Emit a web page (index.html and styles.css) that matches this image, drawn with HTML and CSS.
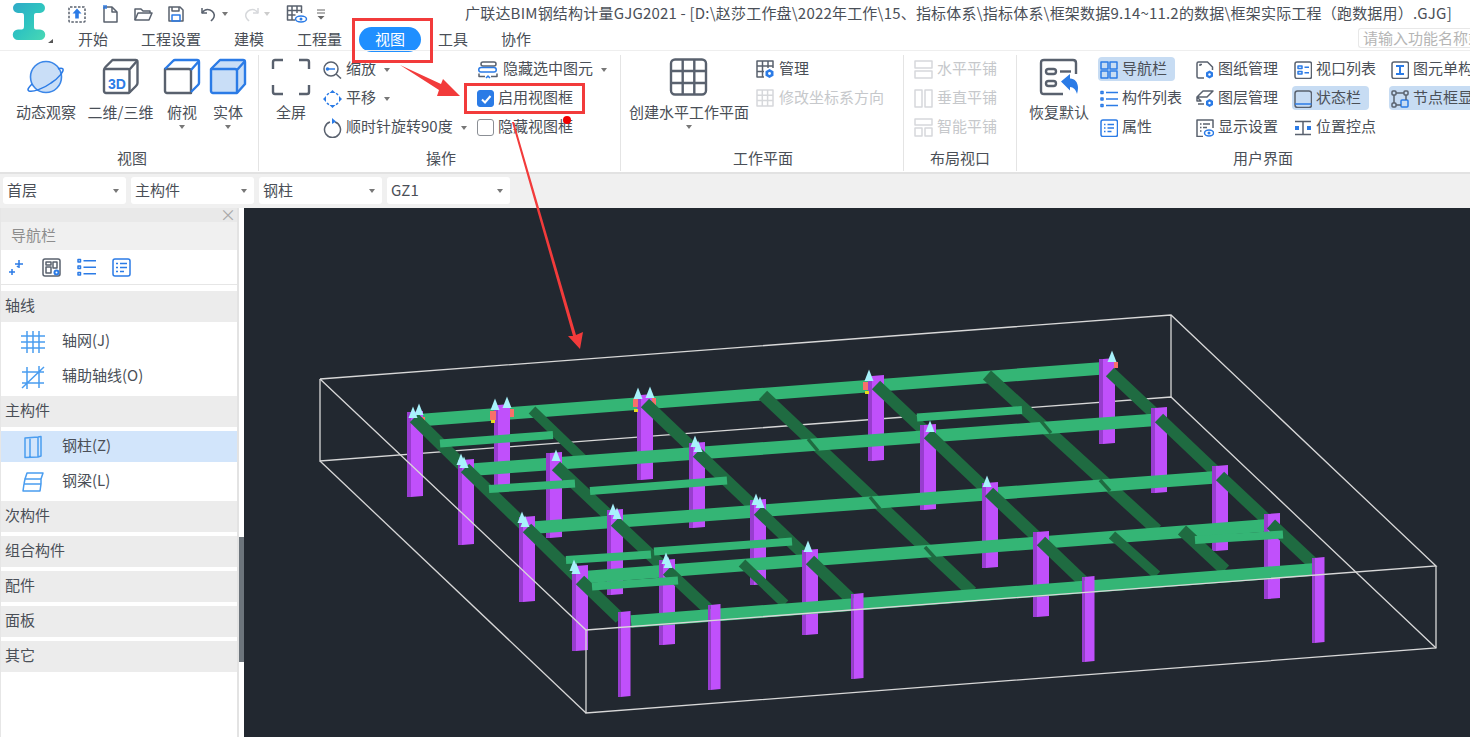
FILE: index.html
```html
<!DOCTYPE html>
<html>
<head>
  <title>广联达BIM钢结构计量GJG2021</title>
  <link rel="stylesheet" href="styles.css">
</head>
<body>
<div class="app">

  <!-- title bar and tabs -->
  <div class="header">
    <div class="logo">
      <svg width="60" height="50" viewBox="0 0 60 50">
        <defs>
          <linearGradient id="logoFill" x1="0" y1="0" x2="1" y2="1">
            <stop offset="0" stop-color="#2fa9c8"/>
            <stop offset="0.5" stop-color="#2fc4c0"/>
            <stop offset="1" stop-color="#49d8b4"/>
          </linearGradient>
        </defs>
        <path d="M18 3h22a4.500 4.500 0 0 1 0 10h-3c-3 0-3 1.500-3 3.500v9c0 3 0 4 3 4h3a5 5 0 0 1 0 10.500H18a5 5 0 0 1 0-10.500h3c2.500 0 3-1 3-4v-9c0-2 0-3.500-3-3.500h-3a5 5 0 0 1 0-10z" fill="url(#logoFill)"/>
        <path d="M48 43l5-4v4z" fill="#555"/>
      </svg>
    </div>
    <div class="header-main">
      <div class="titlebar">
        <div class="qat">
          <svg class="ico" width="20" height="20" viewBox="0 0 20 20"><rect class="s-gray dash" x="2" y="3" width="16" height="15" rx="1"/><path class="f-blue" d="M10 4.500l4.500 5h-2.700v5h-3.600v-5H5.500z"/></svg>
          <svg class="ico" width="20" height="20" viewBox="0 0 20 20"><path class="s-gray" d="M4 3h8l5 5v10H4z"/><path class="s-gray" d="M12 3v5h5"/><rect class="f-blue" x="3" y="1" width="4" height="4" opacity="0.7"/></svg>
          <svg class="ico" width="20" height="20" viewBox="0 0 20 20"><path class="s-gray" d="M2 16V5h6l2 2h7v2"/><path class="s-gray" d="M2 16l3-7h14l-3 7z"/></svg>
          <svg class="ico" width="20" height="20" viewBox="0 0 20 20"><path class="s-gray" d="M3 3h11l3 3v11H3z"/><rect class="s-blue" x="6" y="11" width="8" height="6"/><path class="s-gray" d="M6 3v4h7V3"/></svg>
          <div class="qat-split">
            <svg class="ico" width="20" height="20" viewBox="0 0 20 20"><path class="s-gray" d="M3 4v5h5"/><path class="s-gray" d="M3 9c2-3 5-4 8-3 3 1 5 4 4 7-.5 2-2 3-3 4"/></svg>
            <span class="caret"></span>
          </div>
          <div class="qat-split is-off">
            <svg class="ico" width="20" height="20" viewBox="0 0 20 20"><path class="s-light" d="M17 4v5h-5"/><path class="s-light" d="M17 9c-2-3-5-4-8-3-3 1-5 4-4 7 .5 2 2 3 3 4"/></svg>
            <span class="caret"></span>
          </div>
          <svg class="ico qat-table" width="22" height="20" viewBox="0 0 22 20"><path class="s-gray" d="M9 16H1.500V2h14v7M1.500 6.500h14M1.500 11h8M6 2v14M11 2v7"/><ellipse class="s-blue" cx="15" cy="15" rx="5.500" ry="3"/><circle class="f-blue" cx="15" cy="15" r="1.500"/></svg>
          <svg class="qat-more" width="10" height="12" viewBox="0 0 10 12"><path d="M1 2h8M1 5h8" stroke="#666" stroke-width="1.200"/><path d="M1.500 8h7L5 11.500z" fill="#666"/></svg>
        </div>
        <div class="title">广联达BIM钢结构计量GJG2021 - [D:\赵莎工作盘\2022年工作\15、指标体系\指标体系\框架数据9.14~11.2的数据\框架实际工程（跑数据用）.GJG]</div>
      </div>
      <div class="tabs">
        <div class="tab">开始</div>
        <div class="tab">工程设置</div>
        <div class="tab">建模</div>
        <div class="tab">工程量</div>
        <div class="tab tab-active">视图</div>
        <div class="tab">工具</div>
        <div class="tab">协作</div>
        <div class="search">请输入功能名称或关键字</div>
      </div>
    </div>
  </div>

  <!-- ribbon -->
  <div class="ribbon">

    <div class="group group-view">
      <div class="group-body">
        <div class="big w70">
          <svg class="ico" width="40" height="38" viewBox="0 0 40 38"><circle cx="20" cy="19" r="15.500" fill="#c9def7" stroke="#3a86e8" stroke-width="1.600"/><path class="s-blue" d="M6 26C2 30 1 32 3 33c4 1 14-2 22-8 8-5 13-12 12-14-1-1-3-1-5 0"/></svg>
          <div class="big-label">动态观察</div>
        </div>
        <div class="big w75">
          <svg class="ico thick" width="40" height="38" viewBox="0 0 40 38"><path class="s-gray" d="M3 12c0-1 .500-2 1.500-3l7-7h23c1 0 2 1 2 2v21c0 1-.500 2-1.500 3l-7 7H5c-1 0-2-1-2-2z"/><path class="s-gray" d="M3 11h24c1 0 1.500.500 1.500 1.500V35M28.500 11.500L36 3"/><text class="ico-3d" x="7" y="31">3D</text></svg>
          <div class="big-label">二维/三维</div>
        </div>
        <div class="big w44">
          <svg class="ico thick" width="40" height="38" viewBox="0 0 40 38"><path class="s-gray" d="M3 11h24c1 0 2 1 2 2v22H5c-1 0-2-1-2-2z"/><path class="s-blue" d="M3 11l8-8c.500-.500 1-1 2-1h22c1 0 2 1 2 2v21c0 1-.500 1.500-1 2l-7 7M29 12l8-9"/></svg>
          <div class="big-label">俯视</div>
          <span class="caret"></span>
        </div>
        <div class="big w44">
          <svg class="ico thick" width="40" height="38" viewBox="0 0 40 38"><path d="M3 11l9-9h23c1 0 2 1 2 2v22l-8 9H5c-1 0-2-1-2-2z" fill="#c9def7" stroke="#2b7be6" stroke-width="2.400" stroke-linejoin="round"/><path class="s-blue" d="M3 11h24c1 0 2 1 2 2v22M29 12l8-9"/></svg>
          <div class="big-label">实体</div>
          <span class="caret"></span>
        </div>
      </div>
      <div class="group-label">视图</div>
    </div>

    <div class="group group-ops">
      <div class="group-body">
        <div class="big w60">
          <svg class="ico thick" width="40" height="38" viewBox="0 0 40 38"><path class="s-gray" d="M2 11V4c0-1.500 1-2 2-2h8M28 2h8c1.500 0 2 1 2 2v7M38 27v7c0 1.500-1 2-2 2h-8M12 36H4c-1.500 0-2-1-2-2v-7"/></svg>
          <div class="big-label">全屏</div>
        </div>
        <div class="tool-col w155">
          <div class="tool"><svg class="ico" width="19" height="18" viewBox="0 0 19 18"><circle class="s-gray" cx="8" cy="8" r="7"/><path class="s-gray" d="M13 13l5 4.500"/><path class="s-blue" d="M4 8h8"/><circle class="f-blue" cx="4.500" cy="8" r="1.800"/></svg><span class="tool-text">缩放</span><span class="caret"></span></div>
          <div class="tool"><svg class="ico" width="19" height="18" viewBox="0 0 19 18"><path class="f-blue" d="M9.500 0l3 3h-6zM9.500 18l-3-3h6zM0 9l3-3v6zM19 9l-3 3V6z"/><path class="s-blue dash" d="M4 5a7 7 0 0 1 3-2M15 5a7 7 0 0 0-3-2M4 13a7 7 0 0 0 3 2M15 13a7 7 0 0 1-3 2"/></svg><span class="tool-text">平移</span><span class="caret"></span></div>
          <div class="tool"><svg class="ico" width="19" height="20" viewBox="0 0 19 20"><path class="s-gray" d="M7 4a8 8 0 1 0 5 0"/><path class="f-blue" d="M9 0l4 3.500L9 6z"/></svg><span class="tool-text">顺时针旋转90度</span><span class="caret"></span></div>
        </div>
        <div class="tool-col">
          <div class="tool"><svg class="ico" width="20" height="18" viewBox="0 0 20 18"><rect class="s-gray" x="3" y="1" width="15" height="4" rx="2"/><path class="s-blue" d="M3 6.500h13a2 2 0 0 1 0 4.500H3a2 2 0 0 1 0-4.500z"/><path class="s-gray" d="M1 12.500v3h6M13 15.500h6v-3"/><path class="s-blue" d="M8 17l2-2 2 2"/></svg><span class="tool-text gap1">隐藏选中图元</span><span class="caret"></span></div>
          <div class="tool"><span class="check is-on"><svg width="12" height="12" viewBox="0 0 12 12"><path d="M2 6.500L5 9.500 10.500 3" fill="none" stroke="#fff" stroke-width="2"/></svg></span><span class="tool-text">启用视图框</span></div>
          <div class="tool"><span class="check"></span><span class="tool-text">隐藏视图框</span></div>
        </div>
      </div>
      <div class="group-label">操作</div>
    </div>

    <div class="group group-plane">
      <div class="group-body">
        <div class="big w130">
          <svg class="ico thick" width="40" height="38" viewBox="0 0 40 38"><rect class="s-gray" x="2" y="1.500" width="35" height="35" rx="4"/><path class="s-gray" d="M13.700 1.500v35M25.300 1.500v35M2 13h35M2 25h35"/></svg>
          <div class="big-label">创建水平工作平面</div>
          <span class="caret"></span>
        </div>
        <div class="tool-col">
          <div class="tool"><svg class="ico" width="19" height="19" viewBox="0 0 19 19"><path class="s-gray" d="M8 17H1V1h16v7M1 6h16M1 11.500h7M6.500 1v16M12 1v7"/><path class="f-blue" d="M13.500 9l4 2.300v4.500l-4 2.300-4-2.300v-4.500z"/><circle cx="13.500" cy="13.500" r="1.400" fill="#fff"/></svg><span class="tool-text">管理</span></div>
          <div class="tool is-off"><svg class="ico" width="19" height="19" viewBox="0 0 19 19"><rect class="s-light" x="1" y="1" width="16" height="16"/><path class="s-light" d="M1 6.300h16M1 11.600h16M6.300 1v16M11.600 1v16"/></svg><span class="tool-text">修改坐标系方向</span></div>
        </div>
      </div>
      <div class="group-label">工作平面</div>
    </div>

    <div class="group group-layout">
      <div class="group-body">
        <div class="tool-col">
          <div class="tool is-off"><svg class="ico" width="19" height="19" viewBox="0 0 19 19"><rect class="s-light" x="1" y="1" width="17" height="7"/><rect class="s-light" x="1" y="11" width="17" height="7"/></svg><span class="tool-text">水平平铺</span></div>
          <div class="tool is-off"><svg class="ico" width="19" height="19" viewBox="0 0 19 19"><rect class="s-light" x="1" y="1" width="7" height="17"/><rect class="s-light" x="11" y="1" width="7" height="17"/></svg><span class="tool-text">垂直平铺</span></div>
          <div class="tool is-off"><svg class="ico" width="19" height="19" viewBox="0 0 19 19"><rect class="s-light" x="1" y="1" width="17" height="6"/><rect class="s-light" x="1" y="10" width="7" height="8"/><rect class="s-light" x="11" y="10" width="7" height="8"/></svg><span class="tool-text">智能平铺</span></div>
        </div>
      </div>
      <div class="group-label">布局视口</div>
    </div>

    <div class="group group-ui">
      <div class="group-body">
        <div class="big w78">
          <svg class="ico thick" width="40" height="38" viewBox="0 0 40 38"><path class="s-gray" d="M24 36H5c-2 0-3-1-3-3V5c0-2 1-3 3-3h29c2 0 3 1 3 3v11"/><rect class="s-gray" x="7" y="11" width="10" height="5" rx="2.500"/><path class="s-gray" d="M21 13.500h11"/><rect class="s-gray" x="7" y="23" width="10" height="5" rx="2.500"/><path class="f-blue" d="M23 23.500l9-7.500v4.500c5 0 8 4 8 9.500 0 2-.500 4-1 6-1-4-3.500-7-7-7v3.500z" transform="translate(-1 0)"/></svg>
          <div class="big-label">恢复默认</div>
        </div>
        <div class="tool-col w96">
          <div class="tool is-active"><svg class="ico" width="18" height="18" viewBox="0 0 18 18"><rect class="s-blue" x="1" y="1" width="7" height="7"/><rect class="s-blue" x="10" y="1" width="7" height="7"/><rect class="s-blue" x="1" y="10" width="7" height="7"/><rect class="s-blue" x="10" y="10" width="7" height="7"/></svg><span class="tool-text">导航栏</span></div>
          <div class="tool"><svg class="ico" width="18" height="18" viewBox="0 0 18 18"><rect class="s-blue" x="1" y="1.500" width="2" height="2"/><rect class="s-blue" x="1" y="8" width="2" height="2"/><rect class="s-blue" x="1" y="14.500" width="2" height="2"/><path class="s-blue" d="M6 2.500h12M6 9h12M6 15.500h12"/></svg><span class="tool-text">构件列表</span></div>
          <div class="tool"><svg class="ico" width="18" height="18" viewBox="0 0 18 18"><rect class="s-blue" x="1" y="1" width="16.500" height="16.500" rx="2"/><path class="s-blue" d="M4 5.500h1.500M7.500 5.500H14M4 9h1.500M7.500 9H14M4 12.500h1.500M7.500 12.500h4"/></svg><span class="tool-text">属性</span></div>
        </div>
        <div class="tool-col w98">
          <div class="tool"><svg class="ico" width="18" height="18" viewBox="0 0 18 18"><path class="s-gray" d="M8 17H2.500C1.500 17 1 16.500 1 15.500v-13C1 1.500 1.500 1 2.500 1h9l5 5v3"/><path class="s-gray" d="M4 5V3.500h2"/><path class="f-blue" d="M13.500 9.500l3.500 2v4l-3.500 2-3.500-2v-4z"/><circle cx="13.500" cy="13.500" r="1.200" fill="#fff"/></svg><span class="tool-text">图纸管理</span></div>
          <div class="tool"><svg class="ico" width="18" height="18" viewBox="0 0 18 18"><path class="s-gray" d="M7 1h10l-6 6H1zM1 7l4 4H1zM2 14h6"/><path class="f-blue" d="M13.500 9l3.500 2v4l-3.500 2-3.500-2v-4z"/><circle cx="13.500" cy="13" r="1.200" fill="#fff"/></svg><span class="tool-text">图层管理</span></div>
          <div class="tool"><svg class="ico" width="18" height="18" viewBox="0 0 18 18"><path class="s-gray" d="M7 17.500H1V1h16v8"/><path class="s-gray" d="M4 5h1.500M7 5h7M4 8.500h1.500M7 8.500h4M4 12h1.500"/><ellipse class="s-blue" cx="13" cy="14" rx="4.500" ry="3"/><circle class="f-blue" cx="13" cy="14" r="1.500"/></svg><span class="tool-text">显示设置</span></div>
        </div>
        <div class="tool-col w97">
          <div class="tool"><svg class="ico" width="18" height="18" viewBox="0 0 18 18"><rect class="s-gray" x="1" y="1" width="16.500" height="16.500" rx="2"/><rect class="s-blue" x="4" y="5" width="4" height="2.500"/><rect class="s-blue" x="4" y="10.500" width="4" height="2.500"/><path class="s-blue" d="M10.500 6.200H15M10.500 11.800H15"/></svg><span class="tool-text">视口列表</span></div>
          <div class="tool is-active"><svg class="ico" width="18" height="18" viewBox="0 0 18 18"><rect class="s-gray" x="1" y="1" width="16.500" height="16.500" rx="2.500"/><path class="s-blue" d="M1 14h16.500"/></svg><span class="tool-text">状态栏</span></div>
          <div class="tool"><svg class="ico" width="18" height="18" viewBox="0 0 18 18"><path class="s-gray" d="M1 2.500h16M1 15.500h16"/><path class="s-gray" d="M9 2.500v13"/><rect class="f-blue" x="1" y="7" width="4" height="4"/><rect class="f-blue" x="13" y="7" width="4" height="4"/></svg><span class="tool-text">位置控点</span></div>
        </div>
        <div class="tool-col">
          <div class="tool"><svg class="ico" width="18" height="18" viewBox="0 0 18 18"><rect class="s-gray" x="1" y="1" width="16.500" height="16.500" rx="2"/><path class="f-blue" d="M5 4h8v2h-3v6h3v2H5v-2h3V6H5z"/></svg><span class="tool-text">图元单构件</span></div>
          <div class="tool is-active"><svg class="ico" width="18" height="18" viewBox="0 0 18 18"><rect class="s-gray" x="1" y="1" width="4" height="4" rx="1"/><rect class="s-gray" x="13" y="1" width="4" height="4" rx="1"/><rect class="s-gray" x="1" y="13" width="4" height="4" rx="1"/><rect class="s-blue" x="10" y="10" width="7" height="7" rx="1"/><path class="s-gray" d="M5 3h8M3 5v8M15 5v5M5 15h5"/></svg><span class="tool-text">节点框显示</span></div>
        </div>
      </div>
      <div class="group-label">用户界面</div>
    </div>
  </div>

  <!-- floor and component selectors -->
  <div class="selectors">
    <div class="select"><span class="select-text">首层</span><span class="caret"></span></div>
    <div class="select"><span class="select-text">主构件</span><span class="caret"></span></div>
    <div class="select"><span class="select-text">钢柱</span><span class="caret"></span></div>
    <div class="select"><span class="select-text">GZ1</span><span class="caret"></span></div>
  </div>

  <div class="main">
    <div class="nav">
      <div class="nav-top"><span class="nav-close">×</span></div>
      <div class="nav-title">导航栏</div>
      <div class="nav-icons">
        <svg class="ico" width="18" height="18" viewBox="0 0 18 18"><path class="s-blue" d="M11 2v8M7 6h8M4 11v6M1 14h6M9 9l1-1"/></svg>
        <svg class="ico" width="19" height="19" viewBox="0 0 19 19"><rect class="s-gray" x="1" y="1" width="17" height="17" rx="2"/><rect class="s-gray" x="4" y="4" width="5" height="3"/><rect class="s-gray" x="11" y="4" width="4" height="6"/><rect class="s-gray" x="4" y="9" width="5" height="6"/><circle class="f-blue" cx="14.500" cy="14.500" r="3"/><circle cx="14.500" cy="14.500" r="1" fill="#fff"/></svg>
        <svg class="ico" width="19" height="18" viewBox="0 0 19 18"><rect class="s-blue" x="1" y="1.500" width="2.500" height="2.500"/><rect class="s-blue" x="1" y="8" width="2.500" height="2.500"/><rect class="s-blue" x="1" y="14.500" width="2.500" height="2.500"/><path class="s-blue" d="M6.500 2.800H19M6.500 9.200H19M6.500 15.700H19"/></svg>
        <svg class="ico" width="19" height="19" viewBox="0 0 19 19"><rect class="s-blue" x="1" y="1" width="17" height="17" rx="2"/><path class="s-blue" d="M4 5.500h2M8 5.500h7M4 9.500h2M8 9.500h7M4 13.500h2M8 13.500h4"/></svg>
      </div>
      <div class="nav-list">
        <div class="nav-section">轴线</div>
        <div class="nav-item"><svg class="ico" width="24" height="24" viewBox="0 0 24 24"><path class="s-sky" d="M6 1v22M12 1v22M18 1v22M0 6h24M0 12h24M0 18h24"/></svg><span>轴网(J)</span></div>
        <div class="nav-item"><svg class="ico" width="24" height="24" viewBox="0 0 24 24"><path class="s-sky" d="M6 2v22M18 1v22M1 7h22M1 18h22M1 23L23 2"/></svg><span>辅助轴线(O)</span></div>
        <div class="nav-section">主构件</div>
        <div class="nav-item is-current"><svg class="ico" width="24" height="24" viewBox="0 0 24 24"><path class="s-sky" d="M4 3l13-1 3-.5V21l-3 1-13 .500zM4 3v19M9 3v20M17 2v20"/></svg><span>钢柱(Z)</span></div>
        <div class="nav-item"><svg class="ico" width="24" height="24" viewBox="0 0 24 24"><path class="s-sky" d="M6 3h16l-2 6H4zM4 9l-1 5M3 14h17l-1 7H2zM20 9v5"/></svg><span>钢梁(L)</span></div>
        <div class="nav-section">次构件</div>
        <div class="nav-section">组合构件</div>
        <div class="nav-section">配件</div>
        <div class="nav-section">面板</div>
        <div class="nav-section">其它</div>
      </div>
    </div>

    <div class="splitter"><div class="splitter-handle"></div></div>

    <!-- 3d model, drawn in page coordinates -->
    <svg class="viewport" viewBox="244 208 1226 529">
      <defs>
        <g id="col"><polygon class="col-dark" points="0,0 4,0 4,85 0,85"/><polygon class="col-light" points="4,0 16,-1 16,84 4,85"/></g>
        <g id="colf"><polygon class="col-dark" points="0,0 2.500,0 2.500,85 0,85"/><polygon class="col-light" points="2.500,0 12.500,-1 12.500,84 2.500,85"/></g>
        <polygon id="pin" class="pin" points="0,-6.500 4.500,5 -4.500,5"/>
      </defs>

      <polyline class="wire" points="320,379 320,461 1171,397 1436,648"/>
      <polyline class="wire" points="1171,315 1171,397"/>

      <!-- row 1 -->
      <line class="bx" x1="422" y1="420" x2="1100" y2="368.500"/>
      <use href="#col" x="407" y="412"/><use href="#col" x="494" y="405"/><use href="#col" x="637" y="395"/><use href="#col" x="868" y="376"/><use href="#col" x="1099" y="359"/>
      <rect class="mark-red" x="490" y="411" width="6" height="9"/><rect class="mark-red" x="510" y="409" width="4" height="8"/>
      <rect class="mark-red" x="633" y="399" width="5" height="8"/><rect class="mark-red" x="652" y="398" width="4" height="7"/>
      <rect class="mark-red" x="863" y="382" width="5" height="8"/><rect class="mark-red" x="1114" y="362" width="4" height="6"/><rect class="mark-red" x="422" y="417" width="3" height="7"/>
      <rect class="mark-yellow" x="491" y="420" width="4" height="3"/><rect class="mark-yellow" x="634" y="409" width="4" height="3"/><rect class="mark-yellow" x="865" y="391" width="4" height="3"/>
      <line class="by" x1="414" y1="418" x2="465" y2="468"/><line class="by" x1="645" y1="403" x2="697" y2="452.500"/><line class="by" x1="876" y1="385" x2="928" y2="434"/><line class="by" x1="1110" y1="372" x2="1159" y2="418"/>
      <line class="by thin" x1="532" y1="410" x2="584" y2="460"/><line class="by" x1="763" y1="395" x2="972" y2="592"/><line class="by" x1="987" y1="375" x2="1157" y2="530"/>

      <!-- row 2, secondary -->
      <line class="bs" x1="440" y1="443.500" x2="553" y2="435"/><line class="bs" x1="917" y1="417.500" x2="1022" y2="410"/>

      <!-- row 3 -->
      <line class="bx" x1="474" y1="469.500" x2="1153" y2="420"/>
      <line class="slit" x1="808" y1="439" x2="818" y2="451"/><line class="slit" x1="1041" y1="421" x2="1051" y2="433"/>
      <use href="#col" x="458" y="460"/><use href="#col" x="546" y="453"/><use href="#col" x="689" y="443"/><use href="#col" x="920" y="425"/><use href="#col" x="1151" y="408"/>
      <line class="by" x1="465" y1="468" x2="527" y2="528"/><line class="by" x1="556" y1="466" x2="615" y2="521.500"/><line class="by" x1="697" y1="452.500" x2="758" y2="510.500"/><line class="by" x1="928" y1="434" x2="989" y2="492"/><line class="by" x1="1159" y1="418" x2="1220" y2="476"/>

      <!-- row 4, secondary -->
      <line class="bs" x1="489" y1="489" x2="575" y2="483.500"/><line class="bs" x1="590" y1="491" x2="727" y2="480.500"/>

      <!-- row 5 -->
      <line class="bx" x1="535" y1="527.500" x2="1213" y2="477.500"/>
      <line class="slit" x1="870" y1="497" x2="880" y2="509"/><line class="slit" x1="1100" y1="480" x2="1110" y2="491"/>
      <use href="#col" x="519" y="517"/><use href="#col" x="607" y="510"/><use href="#col" x="750" y="500"/><use href="#col" x="982" y="483"/><use href="#col" x="1212" y="466"/>
      <line class="by" x1="527" y1="528" x2="580" y2="580"/><line class="by" x1="615" y1="521.500" x2="667" y2="570.500"/><line class="by" x1="758" y1="510.500" x2="810" y2="560"/><line class="by" x1="989" y1="492" x2="1041" y2="541"/><line class="by" x1="1220" y1="476" x2="1271" y2="524"/>

      <!-- row 6, secondary -->
      <line class="bs" x1="566" y1="560" x2="651" y2="554.500"/><line class="bs" x1="654" y1="551.500" x2="792" y2="541.500"/>

      <!-- row 7 -->
      <line class="bx" x1="587" y1="577" x2="1265" y2="525.500"/>
      <line class="slit" x1="925" y1="547" x2="935" y2="558"/>
      <use href="#col" x="572" y="566"/><use href="#col" x="659" y="560"/><use href="#col" x="802" y="550"/><use href="#col" x="1033" y="532"/><use href="#col" x="1264" y="514"/>
      <line class="by" x1="580" y1="580" x2="620" y2="618.500"/><line class="by" x1="667" y1="570.500" x2="708" y2="609"/><line class="by" x1="810" y1="560" x2="855" y2="603"/><line class="by" x1="1041" y1="541" x2="1088" y2="586"/><line class="by" x1="1271" y1="524" x2="1318" y2="568"/>
      <line class="by thin" x1="742" y1="563" x2="785" y2="604"/><line class="by thin" x1="1112" y1="535" x2="1157" y2="575"/><line class="by" x1="1182" y1="530" x2="1225" y2="570"/>

      <!-- extra secondary beams in front of row 7 -->
      <line class="bs" x1="592" y1="586.500" x2="678" y2="580.500"/><line class="bs" x1="1195" y1="540" x2="1283" y2="534.500"/>

      <!-- front row -->
      <line class="bx" x1="631" y1="621.500" x2="1313" y2="569.500"/>
      <use href="#colf" x="618" y="612"/><use href="#colf" x="708" y="605"/><use href="#colf" x="851" y="594"/><use href="#colf" x="1082" y="577"/><use href="#colf" x="1312" y="558"/>

      <!-- connection markers -->
      <use href="#pin" x="413" y="413"/><use href="#pin" x="419" y="410"/><use href="#pin" x="495" y="405"/><use href="#pin" x="507" y="403"/><use href="#pin" x="638" y="394"/><use href="#pin" x="650" y="393"/>
      <use href="#pin" x="869" y="376"/><use href="#pin" x="1112" y="357"/><use href="#pin" x="461" y="460"/><use href="#pin" x="464" y="463"/><use href="#pin" x="556" y="456"/><use href="#pin" x="695" y="442"/><use href="#pin" x="698" y="447"/>
      <use href="#pin" x="930" y="427"/><use href="#pin" x="522" y="518"/><use href="#pin" x="525" y="522"/><use href="#pin" x="613" y="510"/><use href="#pin" x="617" y="514"/><use href="#pin" x="756" y="500"/><use href="#pin" x="760" y="503"/>
      <use href="#pin" x="987" y="482"/><use href="#pin" x="574" y="566"/><use href="#pin" x="576" y="569"/><use href="#pin" x="666" y="559"/><use href="#pin" x="668" y="563"/><use href="#pin" x="808" y="547"/>

      <!-- view box, front edges -->
      <polyline class="wire" points="320,379 1171,315 1436,566 586,630 320,379"/>
      <polyline class="wire" points="586,630 586,713 1436,648 1436,566"/>
      <line class="wire" x1="320" y1="461" x2="586" y2="713"/>
    </svg>
  </div>

  <!-- red annotations on top of the screenshot -->
  <svg class="notes" width="1470" height="737" viewBox="0 0 1470 737">
    <rect class="note-box" x="353.500" y="19.500" width="78" height="42"/>
    <rect class="note-box" x="465.500" y="84.500" width="118" height="28"/>
    <circle class="note-dot" cx="567" cy="120" r="4"/>
    <polygon class="note-fill" points="400,65 441,84 443,79 460,96 437,96 439,90"/>
    <polygon class="note-fill" points="512,122 514,122 576,335 583,332 580,349 568,336 573,336"/>
  </svg>
</div>
</body>
</html>
```

FILE: styles.css
```css
* {
  box-sizing: border-box;
}
html, body {
  margin: 0;
  height: 100%;
  overflow: hidden;
}
body {
  font-family: "Noto Sans CJK SC", "Noto Sans", sans-serif;
  font-size: 15px;
  line-height: 20px;
  color: #4a4f57;
  background: #fff;
}
.app {
  position: relative;
  width: 1470px;
  height: 737px;
  display: flex;
  flex-direction: column;
  overflow: hidden;
}

/* icon strokes */
.ico {
  display: block;
  flex: none;
  fill: none;
  stroke-width: 1.5;
  stroke-linejoin: round;
}
.ico.thick {
  stroke-width: 2.4;
}
.s-gray { stroke: #59616e; }
.s-blue { stroke: #2b7be6; }
.s-sky { stroke: #4a9df0; }
.s-light { stroke: #d6d8db; }
.f-blue { fill: #2b7be6; stroke: none; }
.dash { stroke-dasharray: 2.500 1.500; }
.ico-3d {
  font-family: "Liberation Sans", sans-serif;
  font-size: 14px;
  font-weight: bold;
  fill: #2b7be6;
  stroke: none;
}
.caret {
  display: inline-block;
  flex: none;
  width: 0;
  height: 0;
  border-left: 3.500px solid transparent;
  border-right: 3.500px solid transparent;
  border-top: 4px solid #777;
}

/* header */
.header {
  display: flex;
  height: 50px;
  flex: none;
}
.logo {
  width: 60px;
  flex: none;
}
.header-main {
  flex: 1;
  min-width: 0;
}
.titlebar {
  display: flex;
  align-items: center;
  height: 27px;
}
.qat {
  display: flex;
  align-items: center;
  gap: 13px;
  margin-left: 7px;
  width: 398px;
  flex: none;
  padding-top: 1px;
}
.qat-split {
  display: flex;
  align-items: center;
  gap: 3px;
}
.is-off .caret {
  border-top-color: #ccc;
}
.qat-table {
  margin-left: 3px;
}
.qat-more {
  margin-left: -5px;
}
.title {
  white-space: nowrap;
  letter-spacing: 0.2px;
  margin-top: -2px;
}
.tabs {
  display: flex;
  gap: 1px;
  height: 23px;
  margin-left: 2px;
}
.tab {
  height: 25px;
  line-height: 23px;
  padding: 0 16px;
}
.tab-active {
  background: #1f8fff;
  color: #fff;
  border-radius: 13px;
}
.search {
  margin: 1px 0 0 auto;
  width: 112px;
  height: 20px;
  padding-left: 4px;
  border: 1px solid #e8e8e8;
  border-right: none;
  border-radius: 3px 0 0 3px;
  font-size: 15px;
  line-height: 17px;
  color: #b5b5b5;
  white-space: nowrap;
  overflow: hidden;
}

/* ribbon */
.ribbon {
  display: flex;
  flex: none;
  height: 124px;
  padding-top: 4px;
  border-top: 1px solid #eeeeee;
  border-bottom: 2px solid #e2e2e2;
  overflow: hidden;
}
.group {
  display: flex;
  flex: none;
  flex-direction: column;
  height: 116px;
  border-right: 1px solid #e4e4e4;
}
.group-view { width: 259px; }
.group-ops { width: 362px; }
.group-plane { width: 283px; }
.group-layout { width: 113px; }
.group-ui { width: 492px; border-right: none; }
.group-body {
  display: flex;
  flex: 1;
}
.group-view .group-body {
  gap: 2px;
  padding-left: 11px;
}
.group-ops .group-body {
  padding-left: 2px;
}
.group-plane .group-body {
  padding-left: 3px;
}
.group-layout .group-body {
  padding-left: 8px;
}
.group-ui .group-body {
  padding-left: 3px;
}
.group-label {
  height: 22px;
  line-height: 18px;
  text-align: center;
}
.group-view .group-label {
  padding-left: 6px;
}
.group-ops .group-label {
  padding-left: 3px;
}
.group-plane .group-label {
  padding-left: 2px;
}
.big {
  display: flex;
  flex: none;
  flex-direction: column;
  align-items: center;
  padding-top: 3px;
}
.big-label {
  margin: 6px 0 3px;
  white-space: nowrap;
}
.w44 { width: 44px; }
.w60 { width: 60px; }
.w70 { width: 70px; }
.w75 { width: 75px; }
.w78 { width: 78px; }
.w96 { width: 96px; }
.w97 { width: 97px; }
.w98 { width: 98px; }
.w130 { width: 130px; }
.w155 { width: 155px; }
.tool-col {
  display: flex;
  flex: none;
  flex-direction: column;
}
.tool {
  display: flex;
  align-items: center;
  align-self: flex-start;
  height: 29px;
  padding: 0 8px 0 2px;
  gap: 4px;
  white-space: nowrap;
}
.tool .caret {
  margin-left: 4px;
}
.tool-text {
  margin-top: -3px;
}
.tool-text.gap1 {
  margin-left: 1px;
}
.tool.is-off {
  color: #c6c8cb;
}
.tool.is-active {
  position: relative;
}
.tool.is-active::before {
  content: "";
  position: absolute;
  z-index: -1;
  left: 0;
  right: 0;
  top: 2px;
  bottom: 3px;
  background: #c7dcf3;
  border-radius: 4px;
}
.check {
  display: flex;
  align-items: center;
  justify-content: center;
  width: 17px;
  height: 17px;
  margin-left: -1px;
  border: 1px solid #8b8f95;
  border-radius: 3px;
}
.check.is-on {
  background: #2b7be6;
  border-color: #2b7be6;
}

/* selectors */
.selectors {
  display: flex;
  flex: none;
  gap: 5px;
  height: 34px;
  padding: 3px;
  background: #f0f0f0;
}
.select {
  display: flex;
  align-items: center;
  justify-content: space-between;
  width: 123px;
  height: 27px;
  padding: 0 7px 0 4px;
  background: #fff;
  border-radius: 3px;
}
.select-text {
  margin-top: -2px;
}

/* main area */
.main {
  display: flex;
  flex: 1;
  min-height: 0;
}
.nav {
  display: flex;
  flex: none;
  flex-direction: column;
  width: 239px;
  border-left: 1px solid #e6e6e6;
  border-right: 2px solid #e3e3e3;
}
.nav-top {
  display: flex;
  justify-content: flex-end;
  height: 14px;
  padding-right: 1px;
  background: #e9e9e9;
}
.nav-close {
  font-size: 16px;
  line-height: 13px;
  color: #a8a8a8;
}
.nav-title {
  height: 28px;
  padding-left: 10px;
  line-height: 25px;
  background: #f0f0f0;
  color: #8d8d8d;
}
.nav-icons {
  display: flex;
  align-items: center;
  gap: 16px;
  height: 34px;
  padding-left: 7px;
}
.nav-list {
  display: flex;
  flex: 1;
  flex-direction: column;
  gap: 4px;
  padding-top: 6px;
  border-top: 1px solid #e6e6e6;
}
.nav-section {
  height: 31px;
  padding-left: 4px;
  line-height: 28px;
  background: #ececec;
}
.nav-item {
  display: flex;
  align-items: center;
  gap: 17px;
  height: 31px;
  padding-left: 20px;
}
.nav-item span {
  margin-top: -4px;
}
.nav-item.is-current {
  background: #d2e5fb;
}
.splitter {
  flex: none;
  width: 5px;
  padding-top: 329px;
  background: #fff;
}
.splitter-handle {
  height: 125px;
  background: #6c747b;
}
.viewport {
  display: block;
  flex: 1;
  min-width: 0;
  background: #222830;
}

/* model */
.wire {
  fill: none;
  stroke: #d8d8d8;
  stroke-width: 1.300;
}
.bx {
  stroke: #34b575;
  stroke-width: 12.500;
}
.bs {
  stroke: #34b575;
  stroke-width: 8;
}
.by {
  stroke: #1f6b41;
  stroke-width: 12;
}
.by.thin {
  stroke-width: 9.500;
}
.slit {
  stroke: #1f6b41;
  stroke-width: 3.500;
}
.col-light { fill: #c050fb; }
.col-dark { fill: #983dcf; }
.pin { fill: #a8f2fb; }
.mark-red { fill: #f8706a; }
.mark-yellow { fill: #e8d820; }

/* annotations */
.notes {
  position: absolute;
  left: 0;
  top: 0;
  pointer-events: none;
}
.note-box {
  fill: none;
  stroke: #f23b3b;
  stroke-width: 3;
}
.note-dot { fill: #f00000; }
.note-fill { fill: #f23b3b; }
```
